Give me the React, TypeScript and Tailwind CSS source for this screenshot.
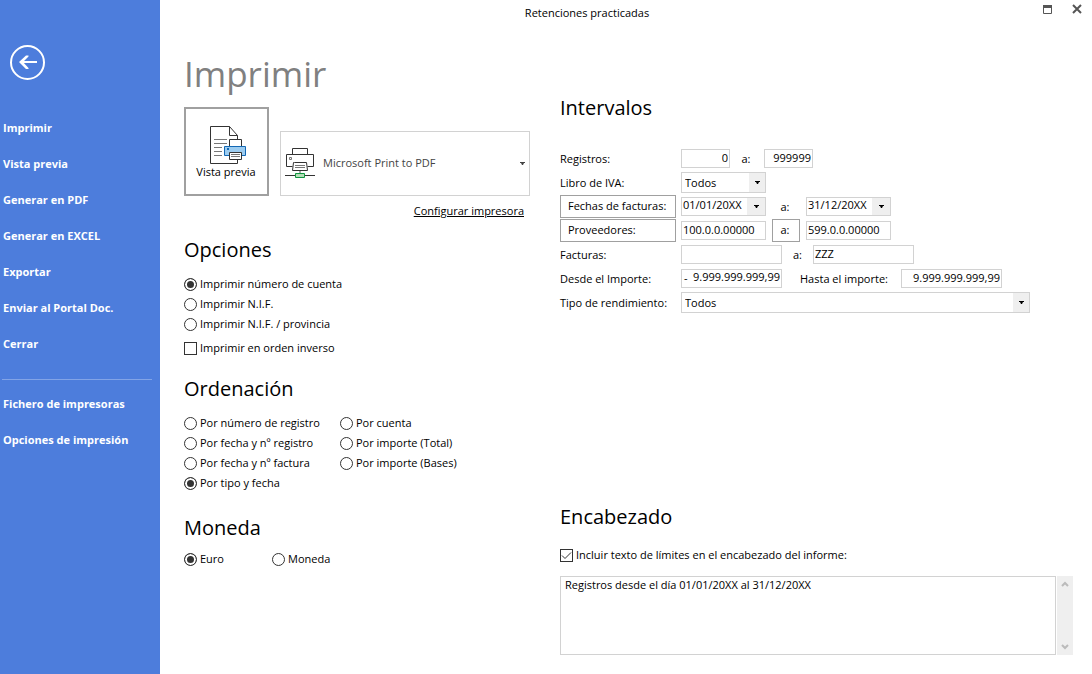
import { useState, type ReactNode } from "react";

type Option = { value: string; label: string };

const mainActions = [
  "Imprimir",
  "Vista previa",
  "Generar en PDF",
  "Generar en EXCEL",
  "Exportar",
  "Enviar al Portal Doc.",
  "Cerrar",
];

const setupActions = ["Fichero de impresoras", "Opciones de impresión"];

const accountOptions: Option[] = [
  { value: "cuenta", label: "Imprimir número de cuenta" },
  { value: "nif", label: "Imprimir N.I.F." },
  { value: "nif-provincia", label: "Imprimir N.I.F. / provincia" },
];

const sortOptions: Option[] = [
  { value: "registro", label: "Por número de registro" },
  { value: "fecha-registro", label: "Por fecha y nº registro" },
  { value: "fecha-factura", label: "Por fecha y nº factura" },
  { value: "tipo-fecha", label: "Por tipo y fecha" },
  { value: "cuenta", label: "Por cuenta" },
  { value: "importe-total", label: "Por importe (Total)" },
  { value: "importe-bases", label: "Por importe (Bases)" },
];

const currencyOptions: Option[] = [
  { value: "euro", label: "Euro" },
  { value: "moneda", label: "Moneda" },
];

function BackIcon() {
  return (
    <svg width="36" height="36" viewBox="0 0 36 36" fill="none" stroke="#fff">
      <circle cx="17.5" cy="17.5" r="16.5" strokeWidth="2" />
      <path d="M11 17H27" strokeWidth="2" />
      <path d="M18.500 10.500h-2.500L9 17l7 7h2.500v-1L13 17l5.500-5.500z" fill="#fff" stroke="none" />
    </svg>
  );
}

function PreviewIcon() {
  return (
    <svg width="36" height="39" viewBox="0 0 36 39" fill="none">
      <path d="M27.500 37.500h-27v-37h19l8 9v28z" stroke="#333" fill="#fff" />
      <path d="M19.500.5v9h8" stroke="#333" />
      <path d="M4 13.500h13M4 17.500h13M4 21.500h8M4 25.500h8M4 29.500h8" stroke="#777" />
      <path d="M19.500 13.500h12v8h-12z" fill="#fff" stroke="#333" />
      <path d="M14.500 20.500h21v9h-21z" fill="#9cccf0" stroke="#1368b4" />
      <path d="M17 22h2v2h-2z" fill="#1368b4" />
      <path d="M19.500 26.500h12v7h-12z" fill="#fff" stroke="#333" />
      <path d="M21 28.500h9M21 30.500h9" stroke="#777" />
    </svg>
  );
}

function PrinterIcon() {
  return (
    <svg width="30" height="31" viewBox="0 0 30 31" fill="none">
      <path d="M7.500 7V.5h15V7" stroke="#333" />
      <path d="M7.500 18.500h-6v-12h27v12h-6" stroke="#333" />
      <path d="M4.500 9.500h2v2h-2z" stroke="#777" />
      <path d="M9.500 14.500h12l1 8h-15l1-8h1z" fill="#fff" stroke="#333" />
      <path d="M10 17.500h10M10 19.500h10" stroke="#777" />
      <path d="M15 23v3" stroke="#aaa" strokeWidth="2" />
      <path d="M0 27.500h30" stroke="#333" />
      <path d="M10.500 25.500h9v4h-9z" fill="#b5dfb8" stroke="#109640" />
    </svg>
  );
}

function Caret() {
  return (
    <svg width="5" height="3" viewBox="0 0 5 3" fill="currentColor">
      <path d="M0 0h5v1H4L3 3H2L1 1H0z" />
    </svg>
  );
}

function SectionTitle({ children }: { children: ReactNode }) {
  return <h2 className="text-xl leading-7 text-black">{children}</h2>;
}

type RadioGroupProps = {
  name: string;
  options: Option[];
  initial: string;
  className: string;
};

function RadioGroup({ name, options, initial, className }: RadioGroupProps) {
  const [value, setValue] = useState(initial);
  return (
    <div role="radiogroup" className={className}>
      {options.map((option) => (
        <label key={option.value} className="flex h-5 items-center gap-[3px]">
          <input
            type="radio"
            name={name}
            value={option.value}
            checked={value === option.value}
            onChange={() => setValue(option.value)}
            className="size-[13px] shrink-0 appearance-none rounded-full border border-[#333] bg-white checked:bg-[#333] checked:shadow-[inset_0_0_0_2px_white]"
          />
          {option.label}
        </label>
      ))}
    </div>
  );
}

function CheckBox({ label, checked }: { label: string; checked?: boolean }) {
  return (
    <label className="flex h-5 items-center gap-[3px]">
      <span className="relative flex size-[13px] shrink-0">
        <input
          type="checkbox"
          defaultChecked={checked}
          className="peer size-[13px] appearance-none border border-[#333] bg-white"
        />
        <svg
          className="pointer-events-none absolute inset-0 hidden peer-checked:block"
          viewBox="0 0 13 13"
          fill="none"
          stroke="#333"
        >
          <path d="M2 6.500l3 3 6-6" />
        </svg>
      </span>
      {label}
    </label>
  );
}

type FieldProps = { id?: string; label?: string; value: string; className: string };

function Field({ id, label, value, className }: FieldProps) {
  return (
    <input
      id={id}
      aria-label={label}
      defaultValue={value}
      className={`h-[19px] min-w-0 border border-[#d2d2d2] bg-white px-px pb-[2px] ${className}`}
    />
  );
}

function DateField({ label, value }: { label: string; value: string }) {
  return (
    <div className="flex h-[19px] w-[85px] border border-[#d2d2d2]">
      <input
        aria-label={label}
        defaultValue={value}
        className="min-w-0 flex-1 px-px pb-[2px]"
      />
      <button
        type="button"
        aria-label="Abrir calendario"
        className="flex w-[18px] items-center justify-center bg-[#efefef] text-black"
      >
        <Caret />
      </button>
    </div>
  );
}

function SelectField({ id, className }: { id: string; className: string }) {
  return (
    <div className={`relative flex h-[21px] border border-[#d2d2d2] ${className}`}>
      <select id={id} className="min-w-0 flex-1 appearance-none bg-white px-[3px] pt-px">
        <option>Todos</option>
      </select>
      <span className="pointer-events-none absolute inset-y-0 right-0 flex w-4 items-center justify-center bg-[#efefef] text-black">
        <Caret />
      </span>
    </div>
  );
}

type RowProps = { id: string; label: string; children: ReactNode };

function Row({ id, label, children }: RowProps) {
  return (
    <div className="flex h-6 items-center gap-[5px]">
      <label htmlFor={id} className="w-[116px] shrink-0 pt-[2px]">
        {label}
      </label>
      {children}
    </div>
  );
}

function RangeRow({ label, children }: { label: string; children: ReactNode }) {
  return (
    <div className="flex h-6 items-center gap-[5px]">
      <button
        type="button"
        className="h-[23px] w-[116px] shrink-0 border border-[#a0a0a0] pl-[7px] text-left"
      >
        {label}
      </button>
      {children}
    </div>
  );
}

function SidebarButton({ children }: { children: ReactNode }) {
  return (
    <button
      type="button"
      className="h-9 w-full pb-px pl-[3px] text-left font-bold hover:bg-white/10"
    >
      {children}
    </button>
  );
}

function Sidebar() {
  return (
    <aside className="w-40 shrink-0 bg-[#4d7ddc] pt-[45px] text-white">
      <button type="button" aria-label="Volver" className="ml-[10px] block">
        <BackIcon />
      </button>
      <nav className="mt-[29px]">
        {mainActions.map((action) => (
          <SidebarButton key={action}>{action}</SidebarButton>
        ))}
        <hr className="mt-[17px] mr-2 mb-[6px] ml-[2px] border-[#82a4e7]" />
        {setupActions.map((action) => (
          <SidebarButton key={action}>{action}</SidebarButton>
        ))}
      </nav>
    </aside>
  );
}

function TitleBar() {
  return (
    <header className="flex h-[26px] items-center">
      <div className="flex-1 text-center text-black">Retenciones practicadas</div>
      <div className="flex w-[78px] justify-end gap-5 pr-[10px] pb-2">
        <button type="button" aria-label="Maximizar">
          <svg width="9" height="9" viewBox="0 0 9 9" fill="none">
            <path d="M.5.5h8v8h-8z" stroke="#555" />
            <path d="M0 0h9v3H0z" fill="#555" />
          </svg>
        </button>
        <button type="button" aria-label="Cerrar ventana">
          <svg width="10" height="10" viewBox="0 0 10 10" fill="none">
            <path d="M1 1l8 8M9 1L1 9" stroke="#555" strokeWidth="2" />
          </svg>
        </button>
      </div>
    </header>
  );
}

function PrinterPanel() {
  return (
    <>
      <div className="mt-[9px] flex items-end gap-[11px]">
        <button
          type="button"
          className="flex h-[89px] w-[85px] shrink-0 flex-col items-center border-2 border-[#a0a0a0] pt-[17px] text-black"
        >
          <span className="pl-[3px]">
            <PreviewIcon />
          </span>
          <span className="-mt-px pr-px">Vista previa</span>
        </button>
        <div className="relative flex h-[65px] flex-1 items-center border border-[#d2d2d2] pl-1">
          <PrinterIcon />
          <select
            aria-label="Impresora"
            className="h-full flex-1 appearance-none bg-transparent pb-px pl-2 text-[#444]"
          >
            <option>Microsoft Print to PDF</option>
          </select>
          <span className="pointer-events-none absolute inset-y-0 right-1 flex items-center text-[#444]">
            <Caret />
          </span>
        </div>
      </div>
      <div className="mt-[6px] flex justify-end pr-[6px]">
        <a href="#configurar" className="leading-[18px] text-black underline">
          Configurar impresora
        </a>
      </div>
    </>
  );
}

function Intervals() {
  return (
    <section>
      <SectionTitle>Intervalos</SectionTitle>
      <div className="mt-6">
        <Row id="registros" label="Registros:">
          <Field id="registros" value="0" className="w-[49px] text-right" />
          <span className="w-6 pt-[2px] pr-[2px] text-center">a:</span>
          <Field label="Registros hasta" value="999999" className="w-[49px] text-right" />
        </Row>
        <Row id="libro" label="Libro de IVA:">
          <SelectField id="libro" className="w-[85px]" />
        </Row>
        <RangeRow label="Fechas de facturas:">
          <DateField label="Fecha desde" value="01/01/20XX" />
          <span className="w-[30px] pt-[2px] pr-[2px] text-center">a:</span>
          <DateField label="Fecha hasta" value="31/12/20XX" />
        </RangeRow>
        <RangeRow label="Proveedores:">
          <Field label="Proveedor desde" value="100.0.0.00000" className="w-[85px]" />
          <button type="button" className="mx-px h-[23px] w-7 border border-[#a0a0a0] pr-[2px]">
            a:
          </button>
          <Field label="Proveedor hasta" value="599.0.0.00000" className="w-[85px]" />
        </RangeRow>
        <Row id="facturas" label="Facturas:">
          <Field id="facturas" value="" className="w-[101px]" />
          <span className="w-[21px] pt-[2px] text-center">a:</span>
          <Field label="Facturas hasta" value="ZZZ" className="w-[101px]" />
        </Row>
        <Row id="importe-desde" label="Desde el Importe:">
          <div className="flex h-[19px] w-[101px] items-center border border-[#d2d2d2]">
            <span className="pl-[2px]">-</span>
            <input
              id="importe-desde"
              defaultValue="9.999.999.999,99"
              className="min-w-0 flex-1 px-px pb-[2px] text-right"
            />
          </div>
          <label htmlFor="importe-hasta" className="w-[109px] pt-[2px] pl-[13px]">
            Hasta el importe:
          </label>
          <Field id="importe-hasta" value="9.999.999.999,99" className="w-[101px] text-right" />
        </Row>
        <Row id="rendimiento" label="Tipo de rendimiento:">
          <SelectField id="rendimiento" className="w-[349px]" />
        </Row>
      </div>
    </section>
  );
}

function HeaderText() {
  return (
    <section>
      <SectionTitle>Encabezado</SectionTitle>
      <div className="mt-[14px]">
        <CheckBox label="Incluir texto de límites en el encabezado del informe:" checked />
      </div>
      <div className="mt-[11px] flex h-[79px] gap-px">
        <textarea
          aria-label="Texto del encabezado"
          defaultValue="Registros desde el día 01/01/20XX al 31/12/20XX"
          className="min-w-0 flex-1 resize-none overflow-hidden border border-[#d2d2d2] px-1 leading-4"
        />
        <div className="flex w-4 flex-col items-center justify-between bg-[#efefef] py-[5px]">
          <button type="button" aria-label="Subir">
            <svg width="8" height="7" viewBox="0 0 8 7" fill="none">
              <path d="M1 5l3-3 3 3" stroke="#bbb" strokeWidth="2" />
            </svg>
          </button>
          <button type="button" aria-label="Bajar">
            <svg width="8" height="7" viewBox="0 0 8 7" fill="none">
              <path d="M1 2l3 3 3-3" stroke="#bbb" strokeWidth="2" />
            </svg>
          </button>
        </div>
      </div>
    </section>
  );
}

export default function App() {
  return (
    <div className="flex min-h-screen bg-white font-['Open_Sans',sans-serif] text-[11px] leading-4 text-black">
      <Sidebar />
      <div className="min-w-0 flex-1">
        <TitleBar />
        <main className="flex gap-[30px] pr-[19px] pl-6">
          <div className="w-[346px] shrink-0 pt-6">
            <h1 className="text-[35px] leading-[48px] text-[#808080]">Imprimir</h1>
            <PrinterPanel />
            <section className="mt-4">
              <SectionTitle>Opciones</SectionTitle>
              <RadioGroup
                name="cuenta"
                options={accountOptions}
                initial="cuenta"
                className="mt-[10px] mb-1"
              />
              <CheckBox label="Imprimir en orden inverso" />
            </section>
            <section className="mt-[17px]">
              <SectionTitle>Ordenación</SectionTitle>
              <RadioGroup
                name="orden"
                options={sortOptions}
                initial="tipo-fecha"
                className="mt-[10px] grid grid-flow-col grid-cols-[156px_1fr] grid-rows-4"
              />
            </section>
            <section className="mt-[21px]">
              <SectionTitle>Moneda</SectionTitle>
              <RadioGroup
                name="moneda"
                options={currencyOptions}
                initial="euro"
                className="mt-[7px] grid grid-cols-[88px_1fr]"
              />
            </section>
          </div>
          <div className="flex min-w-0 flex-1 flex-col gap-[189px] pt-[68px]">
            <Intervals />
            <HeaderText />
          </div>
        </main>
      </div>
    </div>
  );
}
